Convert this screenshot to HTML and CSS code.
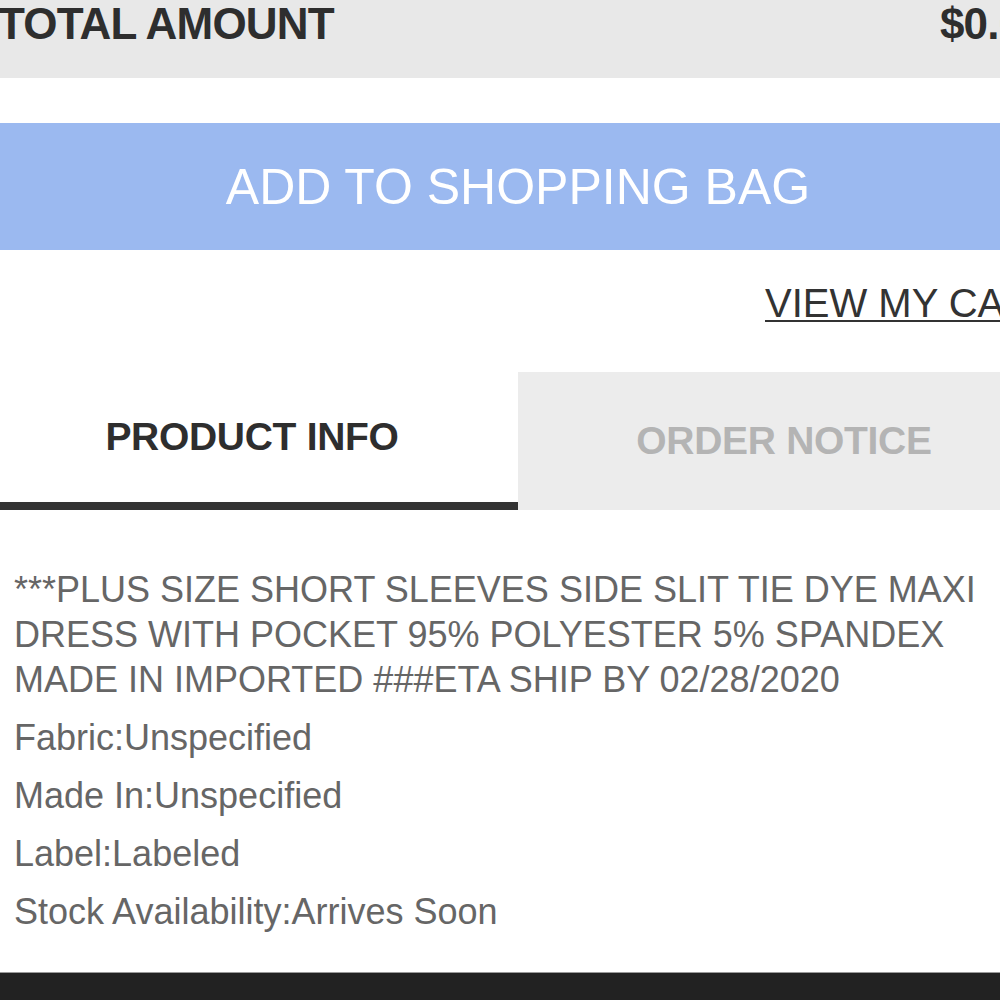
FILE: index.html
```html
<!DOCTYPE html>
<html lang="en">
<head>
<meta charset="utf-8">
<title>Product</title>
<link rel="stylesheet" href="styles.css">
</head>
<body>
<div class="page">
  <div class="total-bar">
    <span class="total-label">TOTAL AMOUNT</span>
    <span class="total-value">$0.00</span>
  </div>
  <button class="add-btn" type="button">ADD TO SHOPPING BAG</button>
  <div class="cart-row">
    <a class="cart-link" href="#">VIEW MY CART</a>
  </div>
  <div class="tabs">
    <div class="tab tab-active">PRODUCT INFO</div>
    <div class="tab tab-inactive">ORDER NOTICE</div>
  </div>
  <div class="info">
    <p class="info-line">***PLUS SIZE SHORT SLEEVES SIDE SLIT TIE DYE MAXI DRESS WITH POCKET 95% POLYESTER 5% SPANDEX MADE IN IMPORTED ###ETA SHIP BY 02/28/2020</p>
    <p class="info-line">Fabric:Unspecified</p>
    <p class="info-line">Made In:Unspecified</p>
    <p class="info-line">Label:Labeled</p>
    <p class="info-line">Stock Availability:Arrives Soon</p>
  </div>
  <div class="footer-bar"></div>
</div>
</body>
</html>
```
FILE: styles.css
```css
html, body {
  margin: 0;
  padding: 0;
  background: #ffffff;
  overflow: hidden;
}

body {
  font-family: "Liberation Sans", Arial, Helvetica, sans-serif;
}

.page {
  width: 1064px;
  margin-left: -14px;
}

.total-bar {
  display: flex;
  justify-content: space-between;
  align-items: flex-start;
  height: 78px;
  box-sizing: border-box;
  padding: 2px 4px 0 12px;
  background: #e8e8e8;
  color: #2e2e2e;
  font-weight: bold;
  font-size: 44px;
  line-height: 44px;
  letter-spacing: -0.8px;
}

.add-btn {
  display: flex;
  align-items: center;
  justify-content: center;
  width: 100%;
  height: 127px;
  margin: 45px 0 0;
  padding: 0;
  border: none;
  background: #9bb9f0;
  color: #ffffff;
  font-family: "Liberation Sans", Arial, Helvetica, sans-serif;
  font-size: 50px;
  line-height: 50px;
}

.cart-row {
  display: flex;
  padding-left: 779px;
  margin-top: 33px;
}

.cart-link {
  color: #333333;
  font-size: 40px;
  line-height: 40px;
  white-space: nowrap;
  text-decoration: underline;
  text-decoration-thickness: 2px;
  text-underline-offset: 3px;
}

.tabs {
  display: flex;
  margin-top: 49px;
  height: 138px;
}

.tab {
  flex: 1;
  display: flex;
  align-items: center;
  justify-content: center;
  box-sizing: border-box;
  font-weight: bold;
  font-size: 39px;
  letter-spacing: -0.3px;
}

.tab-active {
  background: #ffffff;
  color: #2e2e2e;
  border-bottom: 8px solid #333333;
}

.tab-inactive {
  background: #ececec;
  color: #b4b4b4;
}

.info {
  padding: 57px 28px 25px;
  color: #666666;
  font-size: 36px;
  line-height: 45px;
}

.info-line {
  margin: 0 0 13px;
}

.footer-bar {
  height: 60px;
  background: #222222;
  border-top: 1px solid #9a9a9a;
}
```
